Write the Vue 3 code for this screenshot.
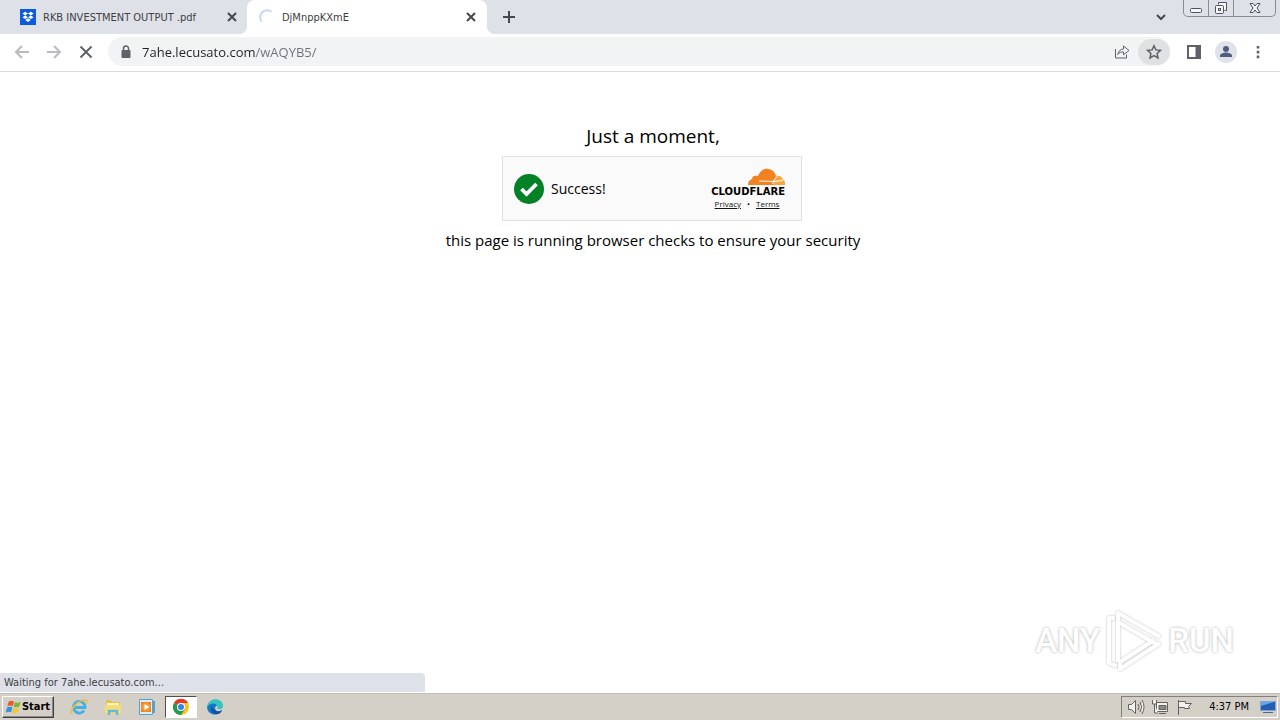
<script setup>
import { ref } from 'vue'
const address = ref('7ahe.lecusato.com/wAQYB5/')
</script>

<template>
  <div class="desktop">
    <header class="browser">
      <div class="tabstrip">
        <div class="tab first">
          <svg class="favicon" viewBox="0 0 16 16" aria-hidden="true"><path fill="#0d5ce0" d="M0 0h16v16H0z"/><path fill="#fff" d="M5.2 2.8 8 4.6 5.2 6.4 2.4 4.6zM10.8 2.8l2.8 1.8-2.8 1.8L8 4.6zM5.2 6.4 8 8.2 5.2 10 2.4 8.2zM10.8 6.4l2.8 1.8-2.8 1.8L8 8.2zM8 9.2l2.8 1.8L8 12.9 5.2 11z"/></svg>
          <span class="title">RKB INVESTMENT OUTPUT .pdf</span>
          <button class="close" aria-label="Close tab"><svg viewBox="0 0 16 16"><path d="m4 4 8 8m0-8-8 8"/></svg></button>
        </div>
        <div class="tab active">
          <svg class="favicon" viewBox="0 0 16 16" aria-hidden="true"><path fill="none" stroke="#c8d7ed" stroke-width="2" d="M2.800 12.600A7 7 0 0 1 12.600 2.700"/></svg>
          <span class="title">DjMnppKXmE</span>
          <button class="close" aria-label="Close tab"><svg viewBox="0 0 16 16"><path d="m4 4 8 8m0-8-8 8"/></svg></button>
        </div>
        <button class="newtab" aria-label="New tab"><svg viewBox="0 0 16 16"><path d="M8 2v12M2 8h12"/></svg></button>
        <button class="search" aria-label="Search tabs"><svg viewBox="0 0 16 16"><path d="m4 6 4 4 4-4"/></svg></button>
        <div class="window">
          <button aria-label="Minimize"><svg viewBox="0 0 16 16"><rect x="2.500" y="8.500" width="11" height="4" rx="1"/></svg></button>
          <button aria-label="Restore"><svg viewBox="0 0 16 16"><path d="M5.500 4.500v-2h8v8h-2"/><rect x="2.500" y="5.500" width="8" height="8" rx="1"/><rect x="5.500" y="8.500" width="2" height="2"/></svg></button>
          <button class="shut" aria-label="Close"><svg viewBox="0 0 16 16"><path d="M3 3.500h3l2 2.500 2-2.500h3L10 8l3 4.500h-3L8 10l-2 2.500H3L6 8z"/></svg></button>
        </div>
      </div>
      <div class="toolbar">
        <button class="nav off" aria-label="Back"><svg viewBox="0 0 16 16"><path d="M15 8H2m6-6L2 8l6 6"/></svg></button>
        <button class="nav off" aria-label="Forward"><svg viewBox="0 0 16 16"><path d="M1 8h13M8 2l6 6-6 6"/></svg></button>
        <button class="nav" aria-label="Stop"><svg viewBox="0 0 16 16"><path d="m2.500 2.500 11 11m0-11-11 11"/></svg></button>
        <div class="omnibox">
          <svg class="lock" viewBox="0 0 16 16" aria-hidden="true"><rect x="3.500" y="6" width="9" height="8" rx="1" fill="#5f6368"/><path d="M5.500 7V4.500a2.500 2.500 0 0 1 5 0V7" fill="none" stroke="#5f6368" stroke-width="1.500"/></svg>
          <input v-model="address" class="address" type="text" aria-label="Address" spellcheck="false">
          <button class="tool" aria-label="Share"><svg viewBox="0 0 16 16"><path d="M1.500 5v9h11v-3.500M9.500 5V2L15 6.500l-5.500 4.300V8C7 7.800 5 8.500 3.800 10.500 4.300 7.500 6.200 5 9.500 5z"/></svg></button>
          <button class="tool star" aria-label="Bookmark"><svg viewBox="0 0 16 16"><path stroke-width="1.500" d="m8 1.700 1.900 4.200 4.600.5-3.400 3.100.9 4.500-4-2.300L4 14l.9-4.500-3.400-3.100 4.600-.5z"/></svg></button>
        </div>
        <button class="tool" aria-label="Side panel"><svg viewBox="0 0 16 16"><path stroke-width="2" d="M2 2h12v12H2z"/><path fill="#5f6368" d="M10 2h4v12h-4z"/></svg></button>
        <button class="tool profile" aria-label="Profile"><svg viewBox="0 0 22 22"><circle cx="11" cy="11" r="11" fill="#dfe2e8"/><circle cx="11" cy="8" r="3" fill="#505c7b"/><path fill="#505c7b" d="M5 16v-1.500c0-2 4-3 6-3s6 1 6 3V16z"/></svg></button>
        <button class="tool" aria-label="Menu"><svg viewBox="0 0 16 16"><path fill="#5f6368" stroke="none" d="M6.700 2h2.600v2.600H6.700zM6.700 6.800h2.600v2.600H6.700zM6.700 11.600h2.600v2.600H6.700z"/></svg></button>
      </div>
    </header>

    <main class="page">
      <h1>Just a moment,</h1>
      <section class="widget">
        <svg class="tick" viewBox="0 0 30 30" aria-hidden="true"><circle cx="15" cy="15" r="15" fill="#038127"/><path d="m7.500 15 5 5 10-10" fill="none" stroke="#fff" stroke-width="3.800"/></svg>
        <span class="success">Success!</span>
        <div class="brand">
          <svg class="cloud" viewBox="0 0 38 18" aria-hidden="true"><path fill="#f6a63c" d="M25 17c1-4 2-7 4-9 3-1 6 0 7 4 1 0 2 1 2 3v2z"/><path fill="#f48120" d="M1 17c0-3 1-5 4-6 0-3 3-4 6-3C13 3 17 0 21 1c4 0 7 3 8 7l-2 4-1 5z"/><path stroke="#fff" d="m12 13 17 .5m-3.500 2.500 1.500-4 3-3.500m-3 5 9-1"/></svg>
          <strong>CLOUDFLARE</strong>
          <div class="links"><a href="#privacy">Privacy</a><span>•</span><a href="#terms">Terms</a></div>
        </div>
      </section>
      <p>this page is running browser checks to ensure your security</p>

      <div class="watermark">
        <span>ANY</span>
        <svg viewBox="0 0 58 64" aria-hidden="true"><path d="M13 53V4l42 24M13 13l38 22M10 9H4v45l8 3M55 34 15 60v-7l34-22"/></svg>
        <span>RUN</span>
      </div>
      <div class="status">Waiting for 7ahe.lecusato.com...</div>
    </main>

    <footer class="taskbar">
      <button class="start"><svg viewBox="0 0 18 18" aria-hidden="true"><path fill="#e85b2a" d="M3 3c2-1.500 4-1 6 0L7.500 8.200c-2-1-4-1-6 0z"/><path fill="#79b934" d="M10 3.500c2 1 4 1 6.500-.5L15 8.500c-2 1.200-4 1-6.300.2z"/><path fill="#348fdc" d="M1.200 9.500c2-1.200 4-1 6 0L5.700 15c-2-1-4-1-6 .3z"/><path fill="#f5c52d" d="M8.300 10c2 1 4 1 6.300-.3L13 15c-2 1.300-4 1-6.300.3z"/></svg>Start</button>
      <button class="app" aria-label="Internet Explorer"><svg viewBox="0 0 18 18"><path d="M14 12.500A5.800 5.800 0 1 1 15 9.500H5" fill="none" stroke="#46aee5" stroke-width="2.800"/><path d="M2 16C-1 12 7 3 15 2c3 0 2 2 1 4" fill="none" stroke="#e9be42" stroke-width="1.500"/></svg></button>
      <button class="app" aria-label="Explorer"><svg viewBox="0 0 18 18"><path fill="#e5c24f" d="M2 2h5l1 2h8v12H2z"/><path fill="#fff6bd" d="M3 5h12v6H3z"/><path fill="#f5dc7a" d="M1 7h16v9H1z"/><path d="M5 17v-4h8v4" fill="none" stroke="#63b9df" stroke-width="2.500"/></svg></button>
      <button class="app" aria-label="Media Player"><svg viewBox="0 0 18 18"><path fill="#dcedf8" stroke="#58a1cb" d="M1.500 1.500h13v15h-13z"/><path fill="#58a1cb" d="M14 3h3v12h-3z"/><path fill="#f08018" d="M3 4h10v10H3z"/><circle cx="8" cy="9" r="4.500" fill="#f59a38"/><path fill="#fff" d="m6.500 6 5 3-5 3z"/></svg></button>
      <button class="app pressed" aria-label="Chrome"><svg viewBox="0 0 18 18"><circle cx="9" cy="9" r="8" fill="#f9c51c"/><path fill="#e33b2e" d="M9 9 2 5a8 8 0 0 1 14 0H9z"/><path fill="#269b50" d="M2 5a8 8 0 0 0 7 12l4-6-4-2z"/><circle cx="9" cy="9" r="4" fill="#fff"/><circle cx="9" cy="9" r="3" fill="#397fe8"/></svg></button>
      <button class="app" aria-label="Edge"><svg viewBox="0 0 18 18"><path fill="#1478c9" d="M1 9C3 3 11 4 11 8c-2 0-3 3 0 5 2 1 4 0 5-1-2 6-14 7-15-3z"/><path fill="#35c4bd" d="M1 9C2-1 17-1 17 8c0 4-5 4-6 2 2-4-5-7-10-1z"/><path fill="#174f9c" d="M6 8c-3 4 1 9 6 8 2 0 4-3 4-4-4 3-9 1-10-4z"/></svg></button>
      <div class="tray">
        <svg viewBox="0 0 18 18" aria-hidden="true"><path d="M1.500 6.500h3l4-4v13l-4-4h-3zM11 6q2 3 0 6M13 4q3 5 0 10M15 2q4 7 0 14"/></svg>
        <svg class="net" viewBox="0 0 18 18" aria-hidden="true"><path d="M5.500 4.500h11v9h-11zM8 15.500h7"/><path fill="#8b8984" d="M8 7.500h7v4H8z"/><path d="M1.500 2v4h4V2M3.500 6v9H7"/></svg>
        <svg class="flag" viewBox="0 0 18 18" aria-hidden="true"><path d="M3.500 17V2M3.500 3.500h7v2h6l-3 3 1 2h-5v-1h-6"/></svg>
        <time>4:37 PM</time>
        <svg class="show" viewBox="0 0 18 18" aria-hidden="true"><path fill="#235eb0" stroke="#7ca5d1" d="M1.500 3.500h15v9h-15z"/><path fill="#63a8ee" stroke="none" d="M2 4h13L2 8z"/><path stroke="#49698e" d="M4 14.500h10"/></svg>
      </div>
    </footer>
  </div>
</template>

<style>
html, body { margin: 0; }
</style>

<style scoped>
* { box-sizing: border-box; }
.desktop { min-height: 100vh; display: flex; flex-direction: column; background: #fff; color: #000; font-family: "Open Sans", "Noto Sans", sans-serif; }
button { border: 0; padding: 0; background: none; font: inherit; color: inherit; display: flex; align-items: center; justify-content: center; flex: none; }
svg { display: block; flex: none; width: 16px; height: 16px; }
button svg { fill: none; stroke: #5f6368; }
.tabstrip { height: 34px; display: flex; background: #dee1e8; }
.tab { position: relative; width: 240px; padding: 0 8px 0 12px; display: flex; align-items: center; font-family: "DejaVu Sans Condensed", "DejaVu Sans", sans-serif; font-size: 11px; color: #3c4043; }
.tab.first { width: 247px; padding-left: 20px; padding-right: 7px; }
.tab.active { background: #fff; border-radius: 8px 8px 0 0; }
.tab.active::before, .tab.active::after { content: ""; position: absolute; bottom: 0; width: 8px; height: 8px; }
.tab.active::before { left: -8px; background: radial-gradient(circle at 0 0, #dee1e8 8px, #fff 8px); }
.tab.active::after { right: -8px; background: radial-gradient(circle at 100% 0, #dee1e8 8px, #fff 8px); }
.title { flex: 1; margin-left: 7px; white-space: nowrap; }
.close svg { stroke: #45484c; stroke-width: 2; }
.newtab { margin-left: 14px; }
.newtab svg { stroke: #45484c; stroke-width: 2; }
.search { margin-left: auto; margin-right: 14px; }
.search svg { stroke: #45484c; stroke-width: 2; }
.window { display: flex; height: 17px; margin-right: 4px; border: 1px solid #888c96; border-top: 0; border-radius: 0 0 5px 5px; }
.window button { width: 25px; border-right: 1px solid #888c96; }
.window .shut { width: 41px; border: 0; }
.window svg { stroke: #50535b; fill: #f4f5f7; }
.toolbar { height: 38px; padding: 0 6px 2px; display: flex; align-items: center; border-bottom: 1px solid #dadce0; }
.nav { width: 32px; height: 32px; }
.nav svg { stroke-width: 2; }
.off svg { stroke: #b9bbbe; }
.omnibox { flex: 1; height: 29px; margin-left: 6px; margin-right: 8px; padding-left: 10px; display: flex; align-items: center; background: #f1f3f4; border-radius: 15px; }
.address { flex: 1; min-width: 0; height: 24px; margin-left: 8px; border: 0; padding: 1px 0 0; outline: 0; background: linear-gradient(90deg, #202124 114px, #6d7175 114px) text; color: transparent; font: 13px "Open Sans", "Noto Sans", sans-serif; }
.tool { width: 32px; height: 26px; }
.star { background: #dfe1e3; border-radius: 13px; }
.profile svg { width: 22px; height: 22px; stroke: none; }
.page { position: relative; flex: 1; display: flex; flex-direction: column; align-items: center; padding-top: 50px; }
h1 { margin: 0 0 0 26px; font-size: 19px; font-weight: 400; line-height: 28px; }
.widget { width: 300px; height: 65px; margin: 6px 0 0 24px; padding: 0 16px 0 11px; display: flex; align-items: center; background: #fafafa; border: 1px solid #e0e0e0; }
.tick { width: 30px; height: 30px; }
.success { margin-left: 7px; font-size: 14px; }
.brand { margin-left: auto; display: flex; flex-direction: column; align-items: flex-end; }
.cloud { width: 38px; height: 18px; fill: none; }
.brand strong { font: bold 10px/12px "DejaVu Sans", sans-serif; }
.links { width: 76px; display: flex; justify-content: center; gap: 6px; font-size: 8px; line-height: 12px; }
.links a { color: #111; }
p { margin: 7px 0 0 26px; font-size: 15px; line-height: 24px; }
.watermark { position: absolute; right: 46px; bottom: 20px; display: flex; align-items: center; gap: 5px; font: 500 33px/64px Roboto, sans-serif; color: #fff; text-shadow: 0 0 3px #aaa; }
.watermark svg { width: 58px; height: 64px; fill: none; stroke: #fff; stroke-width: 4; stroke-linejoin: round; filter: drop-shadow(0 0 1px #bbb); }
.status { position: absolute; left: 0; bottom: 1px; width: 425px; height: 19px; padding-left: 4px; background: #dee1e8; border-radius: 0 4px 0 0; font: 11px/20px "DejaVu Sans Condensed", sans-serif; color: #3c4043; }
.taskbar { height: 27px; padding: 0 2px 1px; display: flex; align-items: center; background: #d4d0c8; border-top: 1px solid #c3c2b8; font-family: "DejaVu Sans Condensed", sans-serif; font-size: 11px; }
.start { width: 52px; height: 22px; margin-right: 9px; border: 1px solid; border-color: #fff #404040 #404040 #fff; box-shadow: inset -1px -1px #888; font-weight: bold; }
.start svg { stroke: none; }
.app { width: 32px; height: 22px; margin-right: 2px; }
.app svg { width: 18px; height: 18px; stroke: none; }
.pressed { background: #fff; border: 1px solid; border-color: #505050 #fff #fff #505050; }
.tray { height: 22px; margin-left: auto; padding: 0 0 0 5px; display: flex; align-items: center; border: 1px solid; border-color: #808080 #fff #fff #808080; }
.tray svg { width: 18px; height: 18px; fill: #f2f1ed; stroke: #65635e; }
.tray .net, .tray .flag { margin-left: 6px; }
time { margin: 0 10px 0 16px; }
</style>
